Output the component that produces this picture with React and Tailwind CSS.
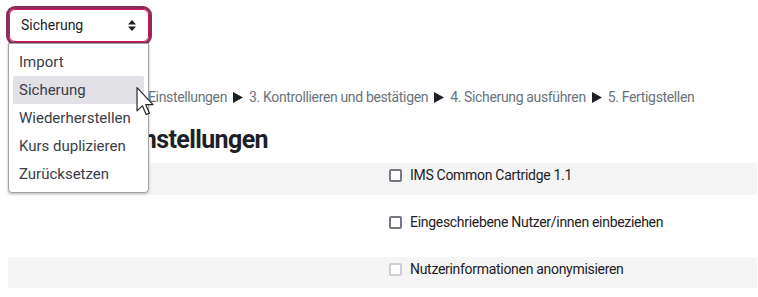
import React from "react";

const cond = { fontFamily: "Roboto, 'Liberation Sans', sans-serif" };

function Tri() {
  return (
    <svg className="mx-[6px] shrink-0" width="10" height="11" viewBox="0 0 10 11">
      <path d="M0 0 L10 5.5 L0 11 Z" fill="#1d2125" />
    </svg>
  );
}

function Check({ disabled }) {
  return (
    <span
      className={
        "inline-block w-[13px] h-[13px] rounded-[2px] border-2 bg-white shrink-0 " +
        (disabled ? "border-[#cfcfd3]" : "border-[#77777f]")
      }
    />
  );
}

export default function App() {
  return (
    <div className="relative w-[758px] h-[297px] bg-white overflow-hidden text-[#1d2125]" style={cond}>
      {/* select */}
      <div className="pt-[9px] pl-[9px]">
        <div className="w-[140px] h-[33px] border border-[#d2155f] rounded-[6px] shadow-[0_0_0_3px_#8e2b5b] flex items-center justify-between pl-[11px] pr-[12px] text-[14px] text-[#1d2125]">
          <span>Sicherung</span>
          <svg width="8" height="11" viewBox="0 0 8 11">
            <path d="M4 0 L8 4.5 L0 4.5 Z" fill="#1d2125" />
            <path d="M4 11 L8 6.5 L0 6.5 Z" fill="#1d2125" />
          </svg>
        </div>
      </div>

      <div className="pl-[8px]">
        {/* breadcrumb */}
        <div className="mt-[45px] h-[20px] leading-[20px] text-[14px] text-[#6a737b] whitespace-nowrap tracking-[-0.35px] flex items-center">
          <span className="w-[140px] shrink-0 overflow-hidden flex justify-end items-center">
            <span className="shrink-0">1. Grundeinstellungen</span>
            <Tri />
            <span className="shrink-0">2. Schema-</span>
          </span>
          <span>Einstellungen</span>
          <Tri />
          <span>3. Kontrollieren und bestätigen</span>
          <Tri />
          <span>4. Sicherung ausführen</span>
          <Tri />
          <span>5. Fertigstellen</span>
        </div>

        {/* heading */}
        <h2 className="mt-[18px] w-[260px] h-[30px] leading-[30px] text-[25px] font-bold tracking-[-0.6px] text-right whitespace-nowrap">
          Grundeinstellungen
        </h2>

        {/* rows */}
        <div className="mt-[8px] text-[14px] tracking-[-0.3px] w-[749px]">
          <div className="h-[32px] bg-[#f5f5f5] pt-[2px] pl-[381px]">
            <label className="flex items-center gap-[8px] h-[20px]">
              <Check />
              <span>IMS Common Cartridge 1.1</span>
            </label>
          </div>
          <div className="h-[62px] bg-white pt-[17px] pl-[381px]">
            <label className="flex items-center gap-[8px] h-[20px]">
              <Check />
              <span>Eingeschriebene Nutzer/innen einbeziehen</span>
            </label>
          </div>
          <div className="h-[31px] bg-[#f5f5f5] pt-[2px] pl-[381px]">
            <label className="flex items-center gap-[8px] h-[20px]">
              <Check disabled />
              <span>Nutzerinformationen anonymisieren</span>
            </label>
          </div>
        </div>
      </div>

      {/* dropdown menu */}
      <div className="absolute left-[8px] top-[43px] w-[141px] h-[150px] bg-white border border-[#a3a3a3] rounded-b-[4px] shadow-[0_1px_3px_rgba(0,0,0,0.25)] pt-[4px] text-[15px] text-[#3a3d48]">
        {["Import", "Sicherung", "Wiederherstellen", "Kurs duplizieren", "Zurücksetzen"].map((t, i) => (
          <div
            key={t}
            className={
              "mx-[4px] h-[28px] leading-[28px] pl-[6px] rounded-[2px] " + (i === 1 ? "bg-[#e1e1e6]" : "")
            }
          >
            {t}
          </div>
        ))}
      </div>

      {/* cursor */}
      <svg className="absolute left-[136px] top-[87px]" width="18" height="29" viewBox="0 0 12 20">
        <path
          d="M0.5 0.5 L0.5 16.5 L4.2 13 L6.8 19 L9 18 L6.5 12.2 L11.5 12.2 Z"
          fill="white"
          stroke="#222"
          strokeWidth="0.8"
          strokeLinejoin="round"
        />
      </svg>
    </div>
  );
}
